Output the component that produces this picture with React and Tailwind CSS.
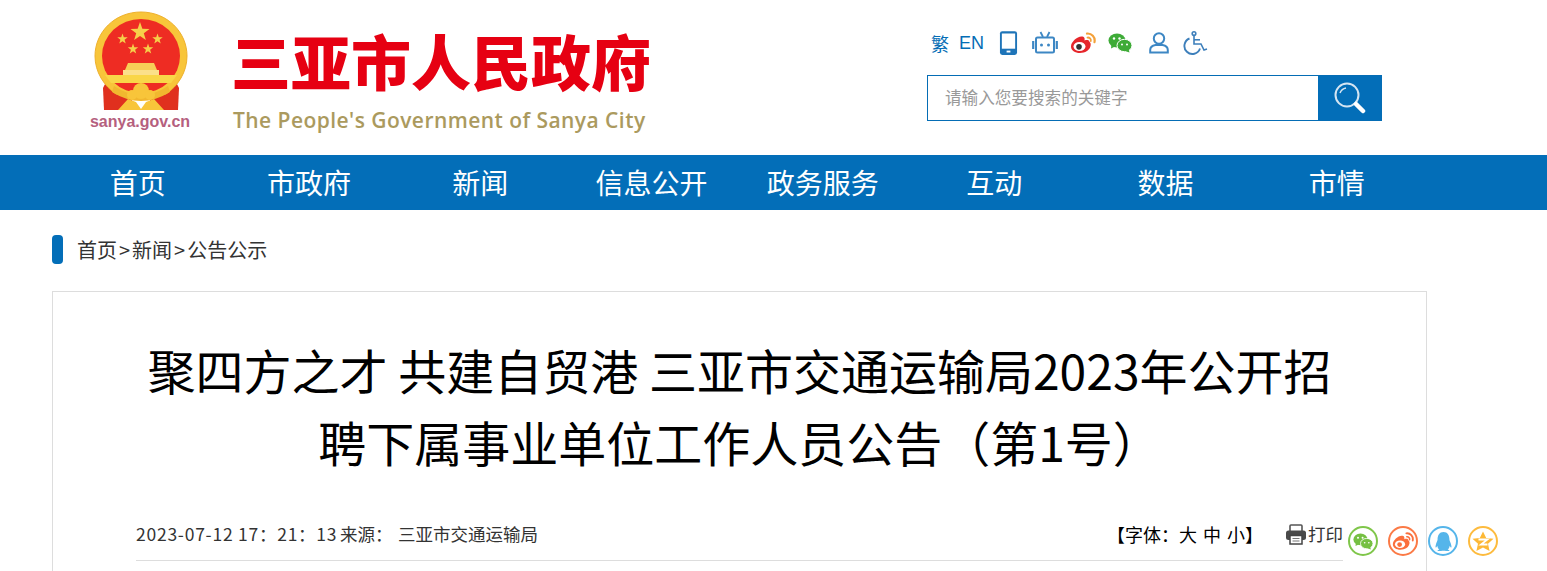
import { FaQq } from 'react-icons/fa'

const CJK = "font-['Noto_Sans_CJK_SC','Liberation_Sans',sans-serif]"

const NAV = ['首页', '市政府', '新闻', '信息公开', '政务服务', '互动', '数据', '市情']

function Star({ cx, cy, r, fill = '#f6cf4a' }) {
  const pts = []
  for (let i = 0; i < 10; i++) {
    const rad = i % 2 === 0 ? r : r * 0.4
    const a = (Math.PI / 5) * i - Math.PI / 2
    pts.push(`${(cx + rad * Math.cos(a)).toFixed(2)},${(cy + rad * Math.sin(a)).toFixed(2)}`)
  }
  return <polygon points={pts.join(' ')} fill={fill} />
}

// National emblem, drawn roughly at its on-screen size
function Emblem() {
  return (
    <svg width="100" height="102" viewBox="0 0 100 102">
      <path d="M17 70 L13 78 L14 100 L34 100 L44 88 Z" fill="#e0301e" />
      <path d="M85 70 L89 78 L88 100 L68 100 L58 88 Z" fill="#e0301e" />
      <ellipse cx="51" cy="46" rx="46" ry="44" fill="none" stroke="#f8c53a" strokeWidth="0" />
      <path d="M51 2 C77 2 97 22 97 46 C97 62 88 76 76 84 L26 84 C14 76 5 62 5 46 C5 22 25 2 51 2 Z" fill="#f8c53a" />
      <path d="M51 2 C77 2 97 22 97 46 C97 62 88 76 76 84 L26 84 C14 76 5 62 5 46 C5 22 25 2 51 2 Z" fill="none" stroke="#eeb02c" strokeWidth="1" />
      <ellipse cx="51" cy="46" rx="39" ry="37" fill="#ee2c23" />
      <Star cx={50} cy={22} r={10} />
      <Star cx={32.5} cy={29} r={5.5} />
      <Star cx={67.5} cy={29} r={5.5} />
      <Star cx={43} cy={39} r={5.5} />
      <Star cx={58} cy={39} r={5.5} />
      <path d="M38 53 H64 L67 60 H35 Z" fill="#f7cf57" />
      <path d="M33 60 H69 V65 H33 Z" fill="#fbe08a" />
      <path d="M15 65 H87 L81 73 H21 Z" fill="#f9d648" />
      <path d="M24 76 Q51 94 78 76 L80 82 Q51 100 22 82 Z" fill="#f1b72f" />
      <circle cx="51" cy="81" r="8" fill="#f8c53a" />
      <circle cx="42" cy="85" r="5" fill="#f8c53a" />
      <circle cx="60" cy="85" r="5" fill="#f8c53a" />
      <path d="M28 100 L38 89 L46 92 L51 99 L56 92 L64 89 L74 100 Z" fill="#f8c53a" />
    </svg>
  )
}

function IconPhone() {
  return (
    <svg width="19" height="26" viewBox="0 0 20 26">
      <rect x="1" y="0.5" width="18" height="25" rx="2.5" fill="#1e74b8" />
      <rect x="3" y="3" width="14" height="16" fill="#fff" />
      <rect x="8" y="21" width="4" height="2" fill="#fff" />
    </svg>
  )
}

function IconRobot() {
  return (
    <svg width="26" height="24" viewBox="0 0 26 24" fill="none" stroke="#3d87c4">
      <rect x="4" y="6.5" width="18" height="15" rx="1.5" strokeWidth="2" />
      <path d="M8.5 1 L11 6 M17.5 1 L15 6" strokeWidth="1.8" />
      <path d="M1.2 10 V18 M24.8 10 V18" strokeWidth="2.2" />
      <circle cx="9.5" cy="14" r="1.5" fill="#3d87c4" stroke="none" />
      <circle cx="16.5" cy="14" r="1.5" fill="#3d87c4" stroke="none" />
    </svg>
  )
}

function IconWeibo({ body = '#e6262b', wave = '#f4a13a', eye = '#333', size = 26 }) {
  return (
    <svg width={size} height={size * 0.85} viewBox="0 0 26 22" fill="none">
      <path d="M1 14.5 C1 9.5 8 3.5 12.5 4.5 C15 5 14.8 7.5 14.5 8.5 C17 7.5 19.5 8 19.5 10 C22 11 21.5 20.5 10 21 C5 21 1 18.5 1 14.5 Z" fill={body} />
      <ellipse cx="9.5" cy="14.5" rx="6" ry="4.5" fill="#fff" />
      <circle cx="9" cy="14.8" r="2.8" fill={eye} />
      <path d="M17 1.5 C21.5 1 25.5 5 24.5 10" stroke={wave} strokeWidth="2.2" strokeLinecap="round" />
      <path d="M17.5 5.5 C19.5 5.2 21.2 7 20.8 9" stroke={wave} strokeWidth="1.8" strokeLinecap="round" />
    </svg>
  )
}

function IconWechat({ color = '#3eab37', w = 24, h = 20, cut = '#fff' }) {
  return (
    <svg width={w} height={h} viewBox="0 0 24 20">
      <ellipse cx="9" cy="7.5" rx="8.5" ry="7" fill={color} />
      <path d="M3.5 11 L3 15.5 L8 13 Z" fill={color} />
      <ellipse cx="16.5" cy="12.5" rx="7.5" ry="6.2" fill={color} stroke={cut} strokeWidth="1" />
      <path d="M20.5 16 L21.5 19.5 L17 18 Z" fill={color} />
      <circle cx="6" cy="5.5" r="1.2" fill={cut} />
      <circle cx="11.5" cy="5.5" r="1.2" fill={cut} />
      <circle cx="14" cy="11.5" r="1" fill={cut} />
      <circle cx="19" cy="11.5" r="1" fill={cut} />
    </svg>
  )
}

function IconUser() {
  return (
    <svg width="20" height="22" viewBox="0 0 20 22" fill="none" stroke="#3d87c4" strokeWidth="2">
      <circle cx="10" cy="6.5" r="5.2" />
      <path d="M1.2 20.5 V18 C1.2 15 4 13.5 6.5 13 H13.5 C16 13.5 18.8 15 18.8 18 V20.5 Z" />
    </svg>
  )
}

function IconWheelchair() {
  return (
    <svg width="25" height="24" viewBox="0 0 25 24" fill="none" stroke="#3d7fbb" strokeWidth="1.6">
      <circle cx="11" cy="2.6" r="1.8" />
      <path d="M6.5 7.5 A8 8 0 1 0 17 17.5" strokeWidth="1.9" />
      <path d="M11 5 V13 H18 L21 19 L24 18" />
      <path d="M11 8.8 H17" />
    </svg>
  )
}

function IconSearch() {
  return (
    <svg width="34" height="32" viewBox="0 0 34 32" fill="none">
      <circle cx="14" cy="13" r="11.5" stroke="#d5e5f2" strokeWidth="2" />
      <path d="M7 11 A8 8 0 0 1 13 6" stroke="#d5e5f2" strokeWidth="1.5" />
      <path d="M23 22 L30 29" stroke="#fff" strokeWidth="4.5" strokeLinecap="round" />
    </svg>
  )
}

function IconPrinter() {
  return (
    <svg width="22" height="21" viewBox="0 0 22 21" fill="none">
      <path d="M5 7 V2 Q5 1 6 1 H16 Q17 1 17 2 V7" stroke="#555" strokeWidth="1.6" />
      <rect x="1" y="6.5" width="20" height="9.5" rx="2.5" fill="#4a4a4a" />
      <rect x="5" y="11.5" width="12" height="8.5" fill="#fff" stroke="#444" strokeWidth="1.5" />
      <path d="M7.5 14.5 H14.5 M7.5 17 H14.5" stroke="#777" strokeWidth="1.2" />
    </svg>
  )
}

function IconQzone() {
  return (
    <svg width="22" height="21" viewBox="0 0 22 21">
      <polygon points="11,0.5 14.2,7 21.5,7.8 16,12.8 17.6,20 11,16.5 4.4,20 6,12.8 0.5,7.8 7.8,7" fill="#fdb835" />
      <path d="M6.5 8.5 H15.5 L9 13.5 H15.5" fill="none" stroke="#fff" strokeWidth="1.8" />
    </svg>
  )
}

function ShareBtn({ className, children }) {
  return (
    <div className={`flex h-[30px] w-[30px] items-center justify-center rounded-full border-2 bg-white ${className}`}>
      {children}
    </div>
  )
}

export default function App() {
  return (
    <div className={`relative h-[571px] overflow-hidden bg-white ${CJK}`}>
      {/* Header */}
      <header className="flex h-[155px]">
        <div className="ml-[90px] flex w-[100px] flex-col items-center pt-[10px]">
          <Emblem />
          <span className="mt-[1px] whitespace-nowrap font-['Liberation_Sans',sans-serif] text-[16px] leading-[18px] font-bold text-[#b5607e]">
            sanya.gov.cn
          </span>
        </div>
        <div className="ml-[43px] w-[440px] pt-[30px]">
          <div className="ml-[-2px] text-[60px] leading-[60px] font-black whitespace-nowrap text-[#e60012]">三亚市人民政府</div>
          <div className="mt-[16px] font-['Open_Sans',sans-serif] text-[21px] leading-[28px] font-semibold tracking-[0.45px] whitespace-nowrap text-[#ab9a5e]">
            The People's Government of Sanya City
          </div>
        </div>
        <div className="ml-[254px] w-[455px] pt-[28px]">
          <div className="flex h-[30px] items-center pl-[4px] text-[18px] text-[#056db5]">
            <span>繁</span>
            <span className="ml-[10px] font-['Liberation_Sans',sans-serif]">EN</span>
            <span className="ml-[15px]"><IconPhone /></span>
            <span className="ml-[14px]"><IconRobot /></span>
            <span className="ml-[12px]"><IconWeibo /></span>
            <span className="ml-[12px]"><IconWechat /></span>
            <span className="ml-[17px]"><IconUser /></span>
            <span className="ml-[14px]"><IconWheelchair /></span>
          </div>
          <div className="mt-[17px] flex h-[46px] border border-[#056db5]">
            <div className="flex flex-1 items-center pb-[2px] pl-[17px] text-[16.6px] text-[#999]">请输入您要搜索的关键字</div>
            <div className="flex w-[63px] items-center justify-center bg-[#036eb8]">
              <IconSearch />
            </div>
          </div>
        </div>
      </header>

      {/* Main nav */}
      <nav className="flex h-[55px] items-center bg-[#036eb8] pl-[52px]">
        {NAV.map((n) => (
          <a key={n} className="w-[171.3px] text-center text-[28px] leading-[55px] text-white">
            {n}
          </a>
        ))}
      </nav>

      {/* Breadcrumb */}
      <div className="mt-[25px] ml-[52px] flex h-[29px] items-center">
        <span className="h-[29px] w-[11px] rounded-[4px] bg-[#036eb8]" />
        <span className="ml-[14px] text-[20px] leading-[29px] text-[#333]">
          首页<span className="px-[2px]">&gt;</span>新闻<span className="px-[2px]">&gt;</span>公告公示
        </span>
      </div>

      {/* Article */}
      <main className="mt-[27px] ml-[52px] h-[400px] w-[1375px] border border-[#ddd] px-[83px]">
        <h1 className="mt-[41px] text-center text-[48px] leading-[72px] font-normal text-black">
          聚四方之才 共建自贸港 三亚市交通运输局2023年公开招聘下属事业单位工作人员公告（第1号）
        </h1>
        <div className="mt-[37px] flex h-[47px] items-start justify-between border-b border-[#ddd] pt-[8px] text-[17.5px] leading-[24px] text-[#333]">
          <div className="flex">
            <span className="w-[204px] tracking-[0.75px]">2023-07-12 17：21：13</span>
            <span className="w-[58px]">来源：</span>
            <span>三亚市交通运输局</span>
          </div>
          <div className="flex items-center">
            <span className="text-[18px] [word-spacing:2px] text-black">【字体：大 中 小】</span>
            <span className="ml-[22px]"><IconPrinter /></span>
            <span className="ml-[1px]">打印</span>
          </div>
        </div>
      </main>

      {/* Share buttons float over the article */}
      <div className="absolute top-[526px] left-[1348px] flex gap-[10px]">
        <ShareBtn className="border-[#7fc64a]"><IconWechat color="#76c043" w={20} h={17} /></ShareBtn>
        <ShareBtn className="border-[#fb7a46]"><IconWeibo body="#fb6f3c" wave="#fb6f3c" eye="#fb6f3c" size={22} /></ShareBtn>
        <ShareBtn className="border-[#55b5ea]"><FaQq size={19} className="text-[#55b5ea]" /></ShareBtn>
        <ShareBtn className="border-[#fdbb3e]"><IconQzone /></ShareBtn>
      </div>
    </div>
  )
}
